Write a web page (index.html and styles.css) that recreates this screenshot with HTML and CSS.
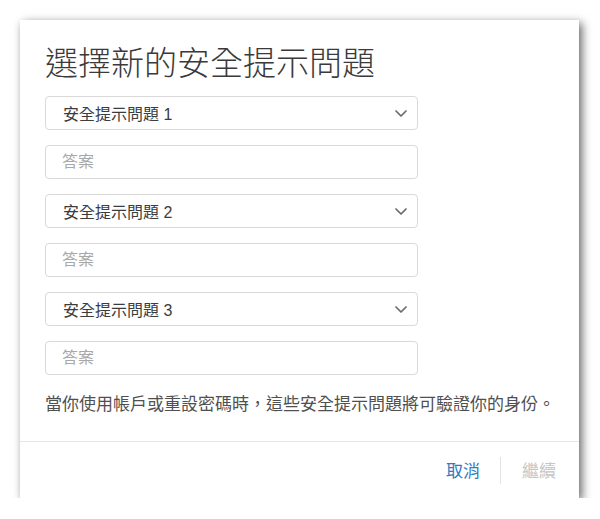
FILE: index.html
```html
<!DOCTYPE html>
<html lang="zh-Hant">
<head>
<meta charset="utf-8">
<title>選擇新的安全提示問題</title>
<link rel="stylesheet" href="styles.css">
</head>
<body>
<div class="dialog">
  <div class="content">
    <h1 class="title">選擇新的安全提示問題</h1>
    <div class="fields">
      <div class="select">
        <span>安全提示問題 1</span>
        <svg class="chev" width="12" height="7" viewBox="0 0 12 7"><polyline points="1,1 6,6 11,1" fill="none" stroke="#6b6b6b" stroke-width="1.7" stroke-linecap="round" stroke-linejoin="round"/></svg>
      </div>
      <input class="answer" type="text" placeholder="答案">
      <div class="select">
        <span>安全提示問題 2</span>
        <svg class="chev" width="12" height="7" viewBox="0 0 12 7"><polyline points="1,1 6,6 11,1" fill="none" stroke="#6b6b6b" stroke-width="1.7" stroke-linecap="round" stroke-linejoin="round"/></svg>
      </div>
      <input class="answer" type="text" placeholder="答案">
      <div class="select">
        <span>安全提示問題 3</span>
        <svg class="chev" width="12" height="7" viewBox="0 0 12 7"><polyline points="1,1 6,6 11,1" fill="none" stroke="#6b6b6b" stroke-width="1.7" stroke-linecap="round" stroke-linejoin="round"/></svg>
      </div>
      <input class="answer" type="text" placeholder="答案">
    </div>
    <p class="note">當你使用帳戶或重設密碼時，這些安全提示問題將可驗證你的身份。</p>
  </div>
  <div class="footer">
    <button class="btn cancel" type="button">取消</button>
    <span class="divider"></span>
    <button class="btn next" type="button" disabled>繼續</button>
  </div>
</div>
</body>
</html>
```
FILE: styles.css
```css
html, body {
  margin: 0;
  padding: 0;
  background: #ffffff;
}
body {
  font-family: "Noto Sans CJK TC", "Noto Sans", sans-serif;
  color: #333333;
}
.dialog {
  box-sizing: border-box;
  width: 559px;
  height: 478px;
  margin: 20px 0 0 20px;
  background: #ffffff;
  box-shadow: 3px 3px 9px rgba(0, 0, 0, 0.6);
  display: flex;
  flex-direction: column;
}
.content {
  flex: 1;
  padding: 21px 0 0 25px;
  display: flex;
  flex-direction: column;
}
.title {
  margin: 0;
  font-size: 33px;
  font-weight: 300;
  line-height: 40px;
  color: #3a3a3a;
}
.fields {
  margin-top: 15px;
  display: flex;
  flex-direction: column;
  gap: 15px;
  width: 373px;
}
.select, .answer {
  box-sizing: border-box;
  height: 34px;
  border: 1px solid #d9d9d9;
  border-radius: 4px;
  font-family: "Liberation Sans", "Noto Sans CJK TC", sans-serif;
  font-size: 16px;
}
.select {
  display: flex;
  align-items: center;
  justify-content: space-between;
  padding: 0 10px 0 17px;
  color: #3c3c3c;
}
.chev {
  display: block;
}
.answer {
  width: 100%;
  padding: 0 0 0 16px;
  margin: 0;
  outline: none;
  color: #333333;
  background: #ffffff;
}
.answer::placeholder {
  color: #a8a8a8;
}
.note {
  margin: 15px 0 0 0;
  font-size: 17px;
  line-height: 25px;
  color: #505050;
}
.footer {
  height: 56px;
  border-top: 1px solid #e6e6e6;
  display: flex;
  align-items: center;
  justify-content: flex-end;
  padding-right: 23px;
}
.btn {
  background: none;
  border: none;
  padding: 0;
  margin: 0;
  font-family: inherit;
  font-size: 17px;
  line-height: 24px;
}
.cancel {
  color: #2f7cc0;
}
.next {
  color: #c6c6c6;
}
.divider {
  width: 1px;
  height: 27px;
  background: #e3e3e3;
  margin: 0 21px 0 20px;
}
```
